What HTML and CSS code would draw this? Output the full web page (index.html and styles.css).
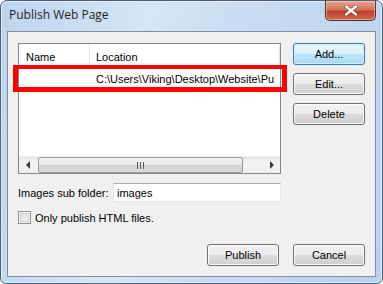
FILE: index.html
```html
<!DOCTYPE html>
<html lang="en">

<head>
    <meta charset="UTF-8">
    <title>Publish Web Page</title>
    <link rel="stylesheet" href="styles.css">
</head>

<body>
    <div class="window">
        <div class="titlebar">
            <span class="title">Publish Web Page</span>
            <div class="close-btn">
                <svg width="14" height="11" viewBox="0 0 14 11">
                    <path d="M2 1.5 L12 9.5 M12 1.5 L2 9.5" stroke="#3a1a1a" stroke-width="4" stroke-linecap="round" opacity="0.45" />
                    <path d="M2 1.5 L12 9.5 M12 1.5 L2 9.5" stroke="#ffffff" stroke-width="2.4" stroke-linecap="round" />
                </svg>
            </div>
        </div>
        <div class="client">
            <div class="top-row">
                <div class="list-view">
                    <div class="list-header">
                        <div class="col col-name">Name</div>
                        <div class="col col-location">Location</div>
                    </div>
                    <div class="list-body">
                        <div class="list-row">
                            <div class="col col-name"></div>
                            <div class="col col-location">C:\Users\Viking\Desktop\Website\Pu</div>
                        </div>
                    </div>
                    <div class="hscroll">
                        <div class="arrow arrow-left"></div>
                        <div class="track">
                            <div class="thumb"><span class="grip"></span></div>
                        </div>
                        <div class="arrow arrow-right"></div>
                    </div>
                    <div class="highlight"></div>
                </div>
                <div class="side-buttons">
                    <button class="btn btn-default">Add...</button>
                    <button class="btn">Edit...</button>
                    <button class="btn">Delete</button>
                </div>
            </div>

            <div class="field-row">
                <label for="folder">Images sub folder:</label>
                <input type="text" id="folder" value="images">
            </div>

            <label class="check-row">
                <span class="checkbox"></span>
                <span>Only publish HTML files.</span>
            </label>

            <div class="footer">
                <button class="btn">Publish</button>
                <button class="btn">Cancel</button>
            </div>
        </div>
    </div>
</body>

</html>
```

FILE: styles.css
```css
* {
    box-sizing: border-box;
    margin: 0;
}

body {
    width: 383px;
    height: 284px;
    background: #ffffff;
    font-family: "Liberation Sans", Arial, sans-serif;
    font-size: 11px;
    color: #000000;
    overflow: hidden;
}

.window {
    width: 383px;
    height: 284px;
    border: 1px solid #4b5e76;
    border-radius: 7px 7px 6px 6px;
    background: linear-gradient(100deg, #bcd5ef 0%, #d5e6f7 35%, #c7dcf2 60%, #b9d2ee 100%);
    padding: 0 6px 6px 6px;
    display: flex;
    flex-direction: column;
    box-shadow: inset 0 0 0 1px #e3eefa;
}

.titlebar {
    height: 30px;
    display: flex;
    align-items: center;
    justify-content: space-between;
    position: relative;
}

.title {
    font-family: "Open Sans", "Noto Sans", sans-serif;
    font-size: 12px;
    color: #1e1e1e;
    padding-left: 2px;
    padding-bottom: 3px;
}

.close-btn {
    position: absolute;
    top: 0;
    right: 0;
    width: 51px;
    height: 20px;
    border: 1px solid #5f2b2b;
    border-top: none;
    border-radius: 0 0 5px 5px;
    background: linear-gradient(#e8a593 0%, #d3735f 45%, #c0402b 55%, #cf6a4e 100%);
    box-shadow: inset 0 0 0 1px rgba(255, 220, 210, 0.5);
    display: flex;
    align-items: center;
    justify-content: center;
}

.client {
    flex: 1;
    background: #f0f0f0;
    border: 1px solid #7f90a4;
    padding: 11px 0 0 10px;
    display: flex;
    flex-direction: column;
}

.top-row {
    display: flex;
    gap: 12px;
}

.list-view {
    width: 263px;
    height: 131px;
    border: 1px solid #828790;
    background: #ffffff;
    display: flex;
    flex-direction: column;
    position: relative;
}

.list-header {
    height: 21px;
    display: flex;
    background: #ffffff;
}

.list-header .col {
    display: flex;
    align-items: center;
    padding-top: 4px;
    border-right: 1px solid #e5e5e5;
}

.col-name {
    width: 71px;
    padding-left: 7px;
}

.col-location {
    flex: 1;
    padding-left: 6px;
    white-space: nowrap;
    overflow: hidden;
}

.list-body {
    flex: 1;
}

.list-row {
    display: flex;
    height: 26px;
    align-items: center;
    padding-top: 1px;
}

.hscroll {
    height: 17px;
    display: flex;
    background: linear-gradient(#e4e4e4, #f3f3f3 30%, #f0f0f0);
    border-top: 1px solid #f0f0f0;
}

.arrow {
    width: 17px;
    display: flex;
    align-items: center;
    justify-content: center;
}

.arrow-left::before {
    content: "";
    border-right: 4px solid #3c3c3c;
    border-top: 4px solid transparent;
    border-bottom: 4px solid transparent;
}

.arrow-right::before {
    content: "";
    border-left: 4px solid #3c3c3c;
    border-top: 4px solid transparent;
    border-bottom: 4px solid transparent;
}

.track {
    flex: 1;
    padding: 0 20px 0 2px;
    display: flex;
}

.thumb {
    flex: 1;
    border: 1px solid #9b9b9b;
    border-radius: 2px;
    background: linear-gradient(#f3f3f3, #e8e8e8 50%, #d6d6d6 51%, #d9d9d9);
    display: flex;
    align-items: center;
    justify-content: center;
}

.grip {
    width: 7px;
    height: 7px;
    background: repeating-linear-gradient(90deg, #5a5a5a 0, #5a5a5a 1px, transparent 1px, transparent 3px);
}

.highlight {
    position: absolute;
    left: -6px;
    top: 21px;
    width: 274px;
    height: 27px;
    border: 5px solid #ff0000;
    border-top-width: 4px;
}

.side-buttons {
    display: flex;
    flex-direction: column;
    gap: 8px;
}

.btn {
    width: 72px;
    height: 22px;
    font-family: "Liberation Sans", Arial, sans-serif;
    font-size: 11px;
    color: #000000;
    border: 1px solid #707070;
    border-radius: 3px;
    background: linear-gradient(#f2f2f2 0%, #ebebeb 50%, #dddddd 51%, #cfcfcf 100%);
    box-shadow: inset 0 0 0 1px #fbfbfb;
    padding: 0;
}

.btn-default {
    border-color: #3c7fb1;
    background: linear-gradient(#eaf6fd 0%, #d9f0fc 50%, #bee6fd 51%, #a7d9f5 100%);
    box-shadow: inset 0 0 0 1px #cdeefe, 0 0 1px #6ec2ea;
}

.field-row {
    display: flex;
    align-items: center;
    margin-top: 9px;
    height: 19px;
}

.field-row label {
    width: 95px;
}

.field-row input {
    width: 168px;
    height: 19px;
    border: 1px solid #e3e3e3;
    border-top-color: #abadb3;
    background: #ffffff;
    font-family: "Liberation Sans", Arial, sans-serif;
    font-size: 11px;
    padding: 0 3px;
    outline: none;
}

.check-row {
    display: flex;
    align-items: center;
    gap: 4px;
    margin-top: 9px;
    height: 13px;
}

.checkbox {
    width: 13px;
    height: 13px;
    border: 1px solid #8e8f8f;
    background: linear-gradient(135deg, #dcdcdc, #f6f6f6);
    box-shadow: inset 0 0 0 1px #f4f4f4, inset 0 0 0 2px #d0d0d0;
}

.footer {
    display: flex;
    gap: 14px;
    margin-top: 20px;
    padding-left: 189px;
}
```
